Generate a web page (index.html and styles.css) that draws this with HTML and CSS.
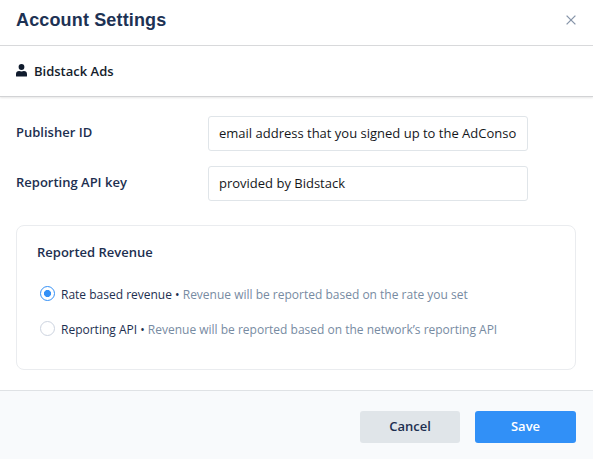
FILE: index.html
```
<!DOCTYPE html>
<html lang="en">
<head>
<meta charset="utf-8">
<title>Account Settings</title>
<link rel="stylesheet" href="styles.css">
</head>
<body>
<main class="dialog">
  <header class="header">
    <h1 class="title"><span>Account Settings</span></h1>
    <button class="close" type="button" aria-label="Close">
      <svg width="10" height="10" viewBox="0 0 10 10"><path d="M.6.6 9.4 9.4M9.4.6.6 9.4"/></svg>
    </button>
  </header>
  <section class="account">
    <svg class="user" width="11" height="13" viewBox="0 0 11 13"><circle cx="5.5" cy="3" r="2.9"/><path d="M0 12.1V10.3C0 8.3 1.2 7.1 3.1 7.1Q5.5 8 7.9 7.1C9.8 7.1 11 8.3 11 10.3V12.1Q11 12.6 10.4 12.6H.6Q0 12.6 0 12.1Z"/></svg>
    <span class="account-name">Bidstack Ads</span>
  </section>
  <form class="content">
    <div class="field">
      <label class="label" for="publisher">Publisher ID</label>
      <input class="input" id="publisher" value="email address that you signed up to the AdConso">
    </div>
    <div class="field">
      <label class="label" for="key">Reporting API key</label>
      <input class="input" id="key" value="provided by Bidstack">
    </div>
    <section class="card">
      <h2 class="card-title"><span>Reported Revenue</span></h2>
      <label class="option"><span class="radio checked"></span><span class="text rate">Rate based revenue • <span class="muted">Revenue will be reported based on the rate you set</span></span></label>
      <label class="option"><span class="radio"></span><span class="text api">Reporting API • <span class="muted">Revenue will be reported based on the network’s reporting API</span></span></label>
    </section>
  </form>
  <footer class="footer">
    <button class="button cancel" type="button">Cancel</button>
    <button class="button save" type="button">Save</button>
  </footer>
</main>
</body>
</html>
```
FILE: styles.css
```
* { box-sizing: border-box; }
body { margin: 0; background: #fff; font-family: "Open Sans", sans-serif; color: #1d2f50; }
.dialog { width: 593px; height: 459px; display: flex; flex-direction: column; overflow: hidden; }
.header { height: 46px; padding: 0 17px 6px 16px; display: flex; align-items: center; justify-content: space-between; border-bottom: 1px solid #d9dadc; }
.title { margin: 0; font: bold 18px/24px "Liberation Sans", sans-serif; letter-spacing: .15px; color: #1d3254; }
.close { width: 10px; height: 10px; padding: 0; border: 0; background: none; display: flex; }
.close path { stroke: #8795a9; stroke-width: 1.3; fill: none; }
.account { height: 51px; padding: 0 16px; display: flex; align-items: center; gap: 7px; border-bottom: 1px solid #d2d3d5; box-shadow: 0 1px 2px rgba(0,0,0,.1); }
.user { fill: #101b2d; margin-top: -1px; }
.account-name { font-size: 13px; font-weight: 600; color: #151d2c; }
.content { flex: 1; padding: 19px 17px 0 16px; }
.field { display: flex; margin-bottom: 15px; }
.label { width: 192px; font-size: 13px; line-height: 33px; font-weight: 600; }
.input { width: 320px; height: 35px; padding: 0 10px 2px; border: 1px solid #e0e5e9; border-radius: 3px; background: #fff; font: 13px "Open Sans", sans-serif; color: #15171b; outline: 0; }
.card { height: 145px; margin-top: 24px; padding: 16px 20px; border: 1px solid #eaecef; border-radius: 8px; }
.card-title { margin: 0 0 14px; font-size: 13px; line-height: 21px; font-weight: 600; }
.option { display: flex; align-items: center; height: 35px; padding-left: 3px; gap: 6px; font-size: 12px; white-space: nowrap; }
.radio { width: 15px; height: 15px; flex: none; border: 1px solid #ccd3df; border-radius: 50%; margin-top: -2px; }
.checked { border-color: #3490f6; background: radial-gradient(circle, #3490f6 3.3px, transparent 3.8px); }
.text { line-height: 18px; }
.muted { color: #778ba2; }
.footer { height: 69px; padding: 20px 17px 0; display: flex; justify-content: flex-end; gap: 15px; border-top: 1px solid #dfe2e5; background: #f8fafc; }
.button { height: 32px; padding: 0 0 2px; border: 0; border-radius: 3px; font: 600 13px "Open Sans", sans-serif; }
.cancel { width: 100px; background: #e0e5e9; color: #1d2f50; }
.save { width: 101px; background: #3190f7; color: #fff; }
```
